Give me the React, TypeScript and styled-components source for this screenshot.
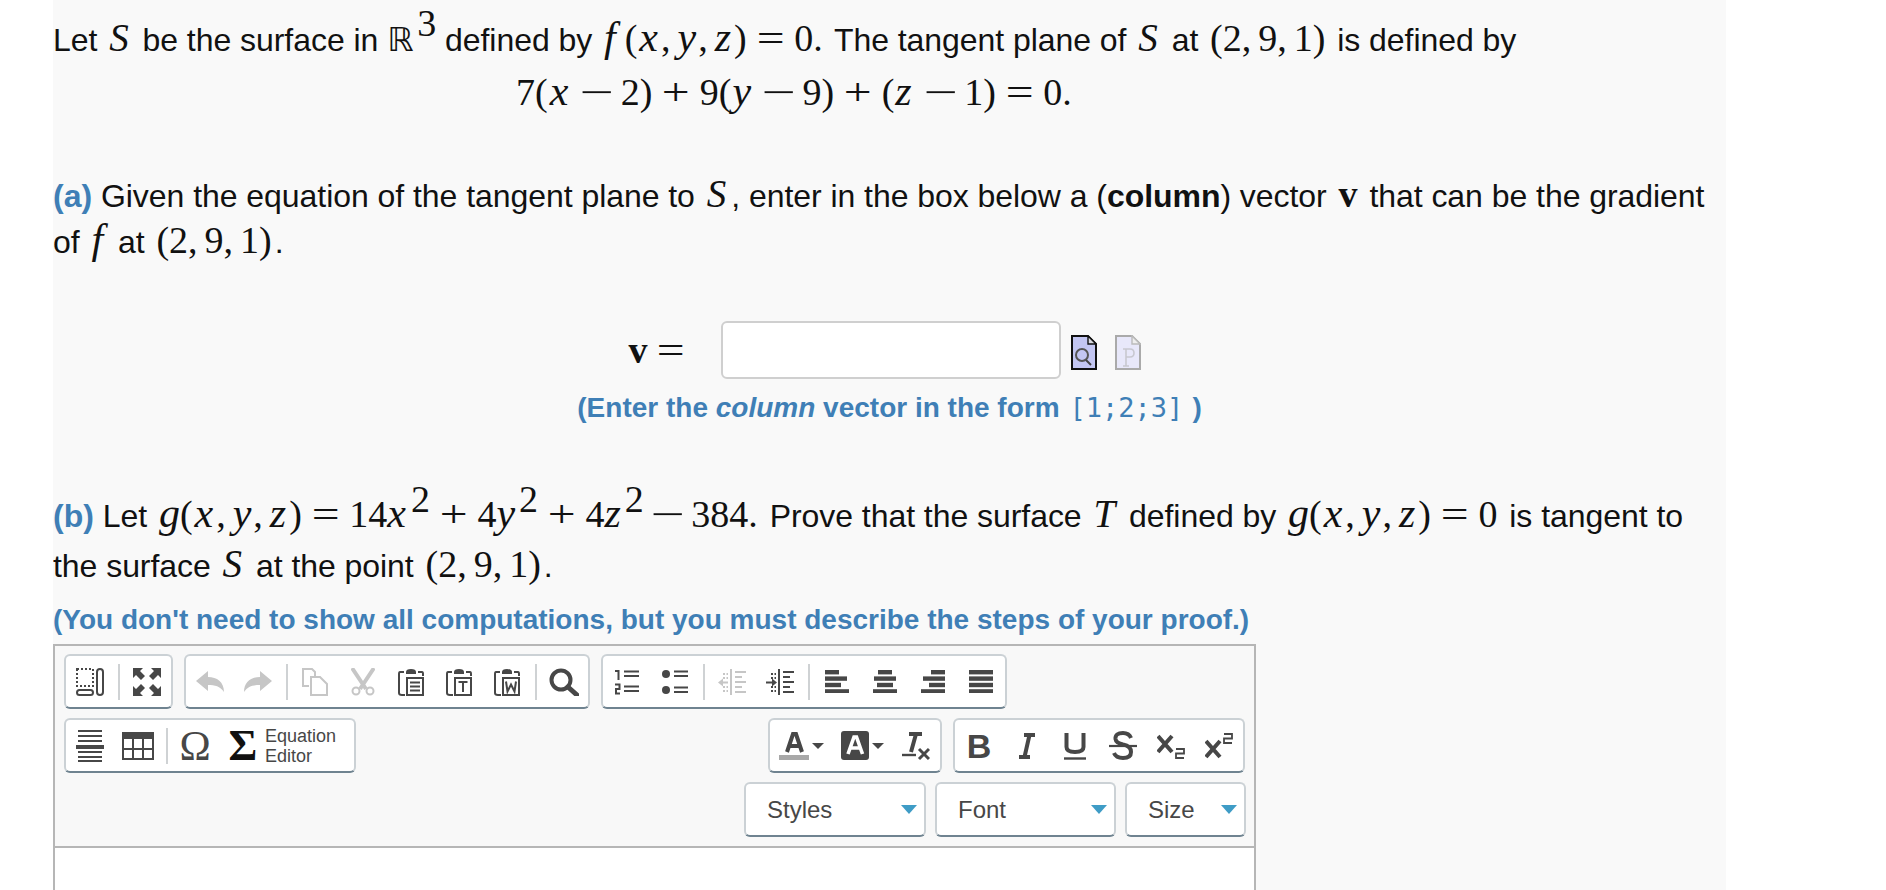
import React from 'react'
import styled, { createGlobalStyle } from 'styled-components'

const GlobalStyle = createGlobalStyle`
  html, body {
    margin: 0;
    height: 890px;
    overflow: hidden;
    background: #fff;
  }
`

const BLUE = '#3f7fb6'
const DARK = '#474747'
const FADED = '#c6c6c6'

const Panel = styled.div`
  width: 1673px;
  height: 890px;
  margin-left: 53px;
  padding-top: 11px;
  box-sizing: border-box;
  overflow: hidden;
  background: #f9f9f9;
  color: #111;
  font-family: 'Liberation Sans', Arial, sans-serif;
  font-size: 32px;
  letter-spacing: -0.05px;
`

const Line = styled.div<{ $h: number; $top?: number; $indent?: number; $center?: boolean }>`
  height: ${({ $h }) => $h}px;
  line-height: ${({ $h }) => $h}px;
  margin-top: ${({ $top }) => $top ?? 0}px;
  padding-left: ${({ $indent }) => $indent ?? 0}px;
  text-align: ${({ $center }) => ($center ? 'center' : 'left')};
  white-space: nowrap;
`

const Math = styled.span`
  font-family: 'Liberation Serif', 'Times New Roman', serif;
  font-size: 38px;
  letter-spacing: 0;
  margin: 0 3px;
`

const Var = styled.i<{ $lead?: number; $gap?: number }>`
  font-family: 'Liberation Serif', 'Times New Roman', serif;
  font-size: 42px;
  line-height: 0;
  padding-left: ${({ $lead }) => $lead ?? 0}px;
  padding-right: ${({ $gap }) => $gap ?? 2}px;
`

const CapVar = styled(Var)`
  font-size: 39px;
`

const Op = styled.span<{ $stretch?: number }>`
  display: inline-block;
  line-height: 0;
  margin: 0 13px;
  transform: scaleX(${({ $stretch }) => $stretch ?? 1.3});
`

const Comma = styled.span<{ $wide?: boolean }>`
  padding-right: ${({ $wide }) => ($wide ? 7 : 6)}px;
`

const Sup = styled.sup`
  font-family: 'Liberation Serif', 'Times New Roman', serif;
  font-size: 38px;
  line-height: 0;
  vertical-align: 15px;
`

const Dbl = styled.span`
  font-family: 'DejaVu Sans', sans-serif;
  font-size: 33px;
  padding-right: 4px;
`

const BoldV = styled.b`
  font-family: 'Liberation Serif', 'Times New Roman', serif;
`

const Blue = styled.span<{ $note?: boolean }>`
  color: ${BLUE};
  font-weight: bold;
  font-size: ${({ $note }) => ($note ? 28 : 32)}px;
  letter-spacing: 0;
`

const Code = styled.code`
  font-family: 'DejaVu Sans Mono', 'Liberation Mono', monospace;
  font-size: 27px;
  font-weight: normal;
  margin: 0 9px 0 10px;
`

const VectorRow = styled.div`
  display: flex;
  justify-content: center;
  align-items: center;
  height: 58px;
  margin-top: 57px;
  padding-right: 10px;
`

const VLabel = styled.div`
  font-family: 'Liberation Serif', 'Times New Roman', serif;
  font-size: 38px;
  width: 92px;
`

const VectorInput = styled.div`
  width: 340px;
  height: 58px;
  box-sizing: border-box;
  border: 2px solid #cfcfcf;
  border-radius: 6px;
  background: #fff;
`

const DocIcons = styled.div`
  display: flex;
  gap: 18px;
  margin-left: 10px;
  padding-top: 4px;
`

const Editor = styled.div`
  width: 1203px;
  margin-top: 3px;
  box-sizing: border-box;
  border: 2px solid #b6b6b6;
  height: 300px;
  background: #fff;
  letter-spacing: 0;
`

const Toolbar = styled.div`
  height: 202px;
  box-sizing: border-box;
  padding: 8px 8px 0 9px;
  border-bottom: 2px solid #b6b6b6;
  background: #f8f8f8;
  display: flex;
  flex-direction: column;
  gap: 9px;
`

const ToolRow = styled.div<{ $end?: boolean; $gap?: number; $right?: number }>`
  display: flex;
  gap: ${({ $gap }) => $gap ?? 11}px;
  height: 55px;
  padding-right: ${({ $right }) => $right ?? 0}px;
  justify-content: ${({ $end }) => ($end ? 'flex-end' : 'flex-start')};
`

const Spacer = styled.div`
  flex: 1;
`

const Group = styled.div`
  display: flex;
  align-items: center;
  box-sizing: border-box;
  height: 55px;
  border: 2px solid #cbd1d5;
  border-bottom-color: #6f8390;
  border-radius: 6px;
  background: #fff;
`

const Btn = styled.div`
  width: 48px;
  height: 50px;
  display: flex;
  align-items: center;
  justify-content: center;
  flex: none;
`

const WideBtn = styled(Btn)<{ $w: number }>`
  width: ${({ $w }) => $w}px;
  gap: 3px;
`

const Sep = styled.div`
  width: 2px;
  height: 36px;
  margin: 0 3.5px;
  background: #cfd2d4;
  flex: none;
`

const EqLabel = styled.div`
  font-size: 18px;
  line-height: 20px;
  color: ${DARK};
  width: 89px;
  margin-left: -2px;
`

const Combo = styled.div<{ $w: number }>`
  width: ${({ $w }) => $w}px;
  height: 55px;
  box-sizing: border-box;
  padding: 0 7px 0 21px;
  display: flex;
  align-items: center;
  justify-content: space-between;
  border: 2px solid #cbd1d5;
  border-bottom-color: #6f8390;
  border-radius: 6px;
  background: #fff;
  color: ${DARK};
  font-size: 24px;
`

const ComboArrow = styled.div`
  width: 0;
  height: 0;
  border-left: 8px solid transparent;
  border-right: 8px solid transparent;
  border-top: 9px solid #3f9cc6;
`

const Caret = styled.div`
  width: 0;
  height: 0;
  border-left: 6px solid transparent;
  border-right: 6px solid transparent;
  border-top: 6px solid ${DARK};
`

const Ic = ({ w = 28, h = 28, children }: { w?: number; h?: number; children: React.ReactNode }) => (
  <svg width={w} height={h} viewBox={`0 0 ${w} ${h}`} fill="none" stroke="none">
    {children}
  </svg>
)

const BlocksIcon = () => (
  <Ic>
    <rect x="1" y="1" width="16" height="17" stroke={DARK} strokeWidth="2" strokeDasharray="2 2" />
    <rect x="21" y="1" width="6" height="26" rx="3" stroke={DARK} strokeWidth="2" />
    <rect x="1" y="22" width="16" height="5" rx="2.5" stroke={DARK} strokeWidth="2" />
  </Ic>
)

const MaxIcon = () => (
  <Ic>
    <path d="M0 0H10L7 3L12 8L8 12L3 7L0 10Z" fill={DARK} />
    <path d="M28 0H18L21 3L16 8L20 12L25 7L28 10Z" fill={DARK} />
    <path d="M0 28H10L7 25L12 20L8 16L3 21L0 18Z" fill={DARK} />
    <path d="M28 28H18L21 25L16 20L20 16L25 21L28 18Z" fill={DARK} />
  </Ic>
)

const UndoIcon = ({ flip }: { flip?: boolean }) => (
  <Ic h={22}>
    <path
      d="M0 10L12 0V6C21 6 28 11 28 21C24 15 19 14 12 14V20Z"
      fill={FADED}
      transform={flip ? 'matrix(-1 0 0 1 28 0)' : undefined}
    />
  </Ic>
)

const CopyIcon = () => (
  <Ic w={26}>
    <path d="M7 18H1V1H10L13 4V8" stroke={FADED} strokeWidth="2" />
    <path d="M9 9H18L25 16V27H9Z" stroke={FADED} strokeWidth="2" />
  </Ic>
)

const CutIcon = () => (
  <Ic w={24}>
    <path d="M1 0L15 21M23 0L9 21" stroke={FADED} strokeWidth="4" />
    <circle cx="5" cy="23" r="3.5" stroke={FADED} strokeWidth="2" />
    <circle cx="19" cy="23" r="3.5" stroke={FADED} strokeWidth="2" />
  </Ic>
)

const Clipboard = ({ children }: { children: React.ReactNode }) => (
  <Ic w={26}>
    <path d="M6 4H2Q1 4 1 6V25Q1 27 4 27H7M20 4H24Q25 4 25 6V8" stroke={DARK} strokeWidth="2" />
    <path d="M8 4Q8 1 13 1Q18 1 18 4V6H8Z" fill={DARK} />
    <rect x="9" y="10" width="16" height="17" fill="#fff" stroke={DARK} strokeWidth="2" />
    {children}
  </Ic>
)

const PasteIcon = () => (
  <Clipboard>
    <path d="M12 14.5H22M12 18.5H22M12 22.5H22" stroke={DARK} strokeWidth="2" />
  </Clipboard>
)

const PasteTextIcon = () => (
  <Clipboard>
    <path d="M12.5 14H21.5M17 14V24" stroke={DARK} strokeWidth="2" />
  </Clipboard>
)

const PasteWordIcon = () => (
  <Clipboard>
    <path d="M12 13.5L13.5 23.5L17 16.5L20.5 23.5L22 13.5" stroke={DARK} strokeWidth="2" />
  </Clipboard>
)

const SearchIcon = () => (
  <Ic w={30}>
    <circle cx="12" cy="12" r="9.5" stroke={DARK} strokeWidth="4" />
    <path d="M19 19L28 27" stroke={DARK} strokeWidth="5" strokeLinecap="round" />
  </Ic>
)

const NumListIcon = () => (
  <Ic w={24} h={26}>
    <path d="M0 2H3.5V11" stroke={DARK} strokeWidth="2" />
    <path d="M0 15.5H4.5V20H1V24.5H5" stroke={DARK} strokeWidth="2" />
    <path d="M9 2.5H24M9 7H24M9 17.5H24M9 22H24" stroke={DARK} strokeWidth="2" />
  </Ic>
)

const BulletIcon = () => (
  <Ic w={26} h={26}>
    <circle cx="4" cy="5" r="4" fill={DARK} />
    <circle cx="4" cy="21" r="4" fill={DARK} />
    <path d="M12 2.5H26M12 7H26M12 18.5H26M12 23H26" stroke={DARK} strokeWidth="2" />
  </Ic>
)

const IndentIcon = ({ color, out }: { color: string; out?: boolean }) => (
  <Ic h={26}>
    <path d="M5 5H10M5 9H10M5 18H10M5 22H10" stroke={color} strokeWidth="2" strokeDasharray="2 1.5" />
    <path d="M13 0V26" stroke={color} strokeWidth="2" />
    <path d="M17 3H28M17 8H24M17 13H28M17 18H24M17 23H28" stroke={color} strokeWidth="2" />
    {out ? (
      <path d="M0 13.5L5 9.5V12.5H10V14.5H5V17.5Z" fill={color} />
    ) : (
      <path d="M11 13.5L6 9.5V12.5H0V14.5H6V17.5Z" fill={color} />
    )}
  </Ic>
)

const AlignIcon = ({ lines }: { lines: [number, number][] }) => (
  <Ic w={24} h={23}>
    {lines.map(([x, w], i) => (
      <rect key={i} x={x} y={i * 6.4} width={w} height="4.4" fill={DARK} />
    ))}
  </Ic>
)

const BarsIcon = () => (
  <Ic h={32}>
    <path d="M2 1H26M2 6H26M2 11H26M2 22H26M2 27H26M2 31H26" stroke={DARK} strokeWidth="1.8" />
    <rect x="0" y="15" width="28" height="4" fill={DARK} />
  </Ic>
)

const TableIcon = () => (
  <Ic w={32} h={28}>
    <rect x="0" y="0" width="32" height="7" fill={DARK} />
    <rect x="1" y="1" width="30" height="26" stroke={DARK} strokeWidth="2" />
    <path d="M11 7V27M21 7V27M1 17H31" stroke={DARK} strokeWidth="2" />
  </Ic>
)

const Glyph = styled.span<{ $size: number; $black?: boolean }>`
  font-family: 'Liberation Serif', 'Times New Roman', serif;
  font-size: ${({ $size }) => $size}px;
  font-weight: ${({ $black }) => ($black ? 'bold' : 'normal')};
  color: ${({ $black }) => ($black ? '#111' : DARK)};
  line-height: 1;
`

const TextColorIcon = () => (
  <Ic w={30} h={30}>
    <path d="M8 21L14 3H17L23 21M10.5 15H20.5" stroke={DARK} strokeWidth="4" />
    <rect x="0" y="24" width="30" height="5" fill="#a8a8a8" />
  </Ic>
)

const BgColorIcon = () => (
  <Ic h={30}>
    <rect x="0" y="0" width="28" height="29" rx="3" fill={DARK} />
    <path d="M7 23L13 6H15.5L21.5 23M9.5 17H19" stroke="#fff" strokeWidth="3.6" />
  </Ic>
)

const ClearIcon = () => (
  <Ic h={30}>
    <path d="M7 3H20M14 3L9 21" stroke={DARK} strokeWidth="4" />
    <path d="M0 24H14" stroke={DARK} strokeWidth="2.4" />
    <path d="M17 18L27 28M27 18L17 28" stroke={DARK} strokeWidth="3" />
  </Ic>
)

const BoldLetter = styled.span`
  font-size: 34px;
  font-weight: bold;
  color: ${DARK};
  line-height: 1;
`

const ItalicIcon = () => (
  <Ic w={18} h={26}>
    <path d="M6 2H17M11.5 2L6.5 24M1 24H12" stroke={DARK} strokeWidth="4" />
  </Ic>
)

const UnderIcon = () => (
  <Ic w={24} h={30}>
    <path d="M3.5 2V16Q3.5 21 12 21Q20.5 21 20.5 16V2" stroke={DARK} strokeWidth="4" />
    <path d="M1 27.5H23" stroke={DARK} strokeWidth="2.4" />
  </Ic>
)

const StrikeIcon = () => (
  <Ic h={30}>
    <path d="M22 7Q20 2 14 2Q6 2 6.5 8Q7 12 14 13.5Q22 15 22 21Q22 27 14 27Q7 27 5 22" stroke={DARK} strokeWidth="4" />
    <path d="M0 15H28" stroke={DARK} strokeWidth="2.2" />
  </Ic>
)

const ScriptIcon = ({ up }: { up?: boolean }) => (
  <Ic h={26}>
    <path d={up ? 'M1 8L15 24M15 8L1 24' : 'M1 3L15 19M15 3L1 19'} stroke={DARK} strokeWidth="4" />
    <path
      d={up ? 'M19 1H27V5.5H19V10H27' : 'M19 16H27V20.5H19V25H27'}
      stroke={DARK}
      strokeWidth="1.8"
    />
  </Ic>
)

const PreviewDoc = () => (
  <svg width="26" height="35" viewBox="0 0 26 35">
    <path d="M1 1H17L25 9V34H1Z" fill="#c3c6f2" stroke="#111" strokeWidth="2" />
    <path d="M17 1V9H25Z" fill="#d9d9e0" stroke="#111" strokeWidth="1.4" />
    <circle cx="11" cy="20" r="6" fill="none" stroke="#555" strokeWidth="2" />
    <path d="M15 25L20 30" stroke="#444" strokeWidth="2" />
  </svg>
)

const PlainDoc = () => (
  <svg width="26" height="35" viewBox="0 0 26 35">
    <path d="M1 1H17L25 9V34H1Z" fill="#e8e8fa" stroke="#aaa" strokeWidth="2" />
    <path d="M17 1V9H25Z" fill="#eee" stroke="#bbb" strokeWidth="1.4" />
    <path d="M8 14H15Q19 14 19 18Q19 22 15 22H11M11 14V31M8 31H14" fill="none" stroke="#c8c8d0" strokeWidth="1.6" />
  </svg>
)

const Args = () => (
  <>
    (<Var $lead={2} $gap={3}>x</Var><Comma>,</Comma><Var $lead={1} $gap={2}>y</Var><Comma>,</Comma><Var $lead={1} $gap={3}>z</Var>)
  </>
)

const Minus = () => <Op $stretch={1.6}>−</Op>

const Point = () => <Math>(2<Comma $wide>,</Comma>9<Comma $wide>,</Comma>1)</Math>

export default function App() {
  return (
    <Panel>
      <GlobalStyle />
      <Line $h={54}>
        Let <Math><CapVar>S</CapVar></Math> be the surface in <Dbl>ℝ</Dbl><Sup>3</Sup> defined by{' '}
        <Math><Var $gap={9}>f</Var><Args /><Op>=</Op>0.</Math> The tangent plane of{' '}
        <Math><CapVar>S</CapVar></Math> at <Point /> is defined by
      </Line>
      <Line $h={52} $top={1} $indent={460}>
        <Math>
          7(<Var $lead={2} $gap={5}>x</Var><Minus />2)<Op>+</Op>9(<Var $lead={1} $gap={4}>y</Var><Minus />9)<Op>+</Op>(<Var $lead={1} $gap={5}>z</Var><Minus />1)<Op>=</Op>0.
        </Math>
      </Line>
      <Line $h={46} $top={53}>
        <Blue>(a)</Blue> Given the equation of the tangent plane to <Math><CapVar>S</CapVar></Math>, enter in the box
        below a (<b>column</b>) vector <Math><BoldV>v</BoldV></Math> that can be the gradient
      </Line>
      <Line $h={47}>
        of <Math><Var $gap={3}>f</Var></Math> at <Point />.
      </Line>
      <VectorRow>
        <VLabel><BoldV>v</BoldV><Op>=</Op></VLabel>
        <VectorInput />
        <DocIcons>
          <PreviewDoc />
          <PlainDoc />
        </DocIcons>
      </VectorRow>
      <Line $h={46} $top={4} $center>
        <Blue $note>
          (Enter the <i>column</i> vector in the form<Code>[1;2;3]</Code>)
        </Blue>
      </Line>
      <Line $h={48} $top={61}>
        <Blue>(b)</Blue> Let{' '}
        <Math>
          <Var $gap={0}>g</Var><Args /><Op>=</Op>14<Var $gap={5}>x</Var><Sup>2</Sup><Op>+</Op>4<Var $gap={4}>y</Var><Sup>2</Sup><Op>+</Op>4<Var $gap={4}>z</Var><Sup>2</Sup><Minus />384.
        </Math>{' '}
        Prove that the surface <Math><CapVar>T</CapVar></Math> defined by{' '}
        <Math><Var $gap={0}>g</Var><Args /><Op>=</Op>0</Math> is tangent to
      </Line>
      <Line $h={48} $top={2}>
        the surface <Math><CapVar>S</CapVar></Math> at the point <Point />.
      </Line>
      <Line $h={46} $top={7}>
        <Blue $note>(You don't need to show all computations, but you must describe the steps of your proof.)</Blue>
      </Line>
      <Editor>
        <Toolbar>
          <ToolRow>
            <Group>
              <Btn><BlocksIcon /></Btn>
              <Sep />
              <Btn><MaxIcon /></Btn>
            </Group>
            <Group>
              <Btn><UndoIcon /></Btn>
              <Btn><UndoIcon flip /></Btn>
              <Sep />
              <Btn><CopyIcon /></Btn>
              <Btn><CutIcon /></Btn>
              <Btn><PasteIcon /></Btn>
              <Btn><PasteTextIcon /></Btn>
              <Btn><PasteWordIcon /></Btn>
              <Sep />
              <Btn><SearchIcon /></Btn>
            </Group>
            <Group>
              <Btn><NumListIcon /></Btn>
              <Btn><BulletIcon /></Btn>
              <Sep />
              <Btn><IndentIcon color={FADED} out /></Btn>
              <Btn><IndentIcon color={DARK} /></Btn>
              <Sep />
              <Btn><AlignIcon lines={[[0, 14], [0, 22], [0, 16], [0, 24]]} /></Btn>
              <Btn><AlignIcon lines={[[5, 14], [1, 22], [4, 16], [0, 24]]} /></Btn>
              <Btn><AlignIcon lines={[[10, 14], [2, 22], [8, 16], [0, 24]]} /></Btn>
              <Btn><AlignIcon lines={[[0, 24], [0, 24], [0, 24], [0, 24]]} /></Btn>
            </Group>
          </ToolRow>
          <ToolRow $right={1}>
            <Group>
              <Btn><BarsIcon /></Btn>
              <Btn><TableIcon /></Btn>
              <Sep />
              <Btn><Glyph $size={42}>Ω</Glyph></Btn>
              <Btn><Glyph $size={44} $black>Σ</Glyph></Btn>
              <EqLabel>Equation Editor</EqLabel>
            </Group>
            <Spacer />
            <Group>
              <WideBtn $w={62}><TextColorIcon /><Caret /></WideBtn>
              <WideBtn $w={60}><BgColorIcon /><Caret /></WideBtn>
              <Btn><ClearIcon /></Btn>
            </Group>
            <Group>
              <Btn><BoldLetter>B</BoldLetter></Btn>
              <Btn><ItalicIcon /></Btn>
              <Btn><UnderIcon /></Btn>
              <Btn><StrikeIcon /></Btn>
              <Btn><ScriptIcon /></Btn>
              <Btn><ScriptIcon up /></Btn>
            </Group>
          </ToolRow>
          <ToolRow $end $gap={9}>
            <Combo $w={182}>Styles<ComboArrow /></Combo>
            <Combo $w={181}>Font<ComboArrow /></Combo>
            <Combo $w={121}>Size<ComboArrow /></Combo>
          </ToolRow>
        </Toolbar>
      </Editor>
    </Panel>
  )
}
